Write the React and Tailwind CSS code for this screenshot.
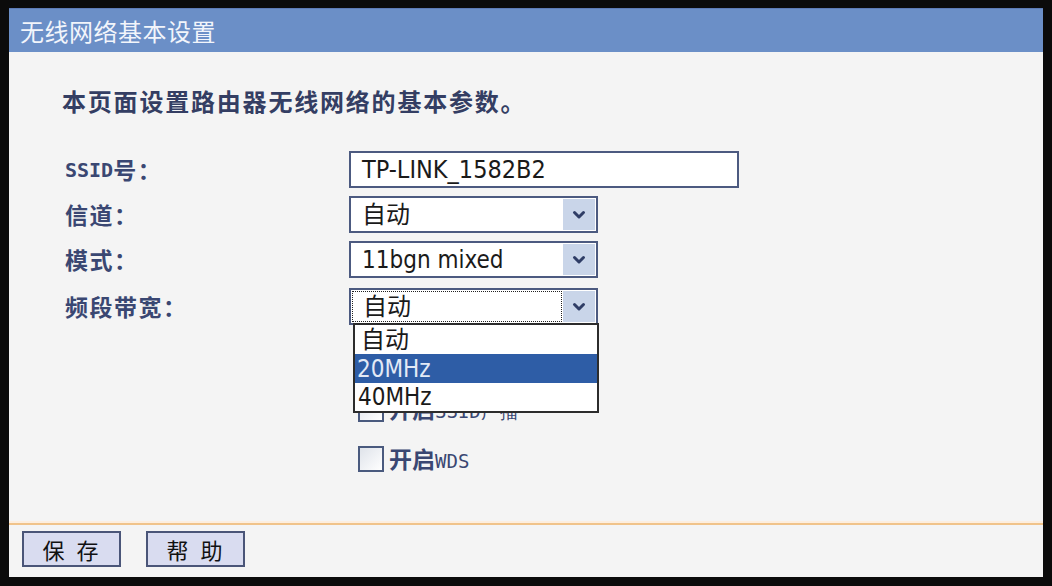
import React from "react";

const CJK = { fontFamily: '"Noto Sans CJK SC", "Noto Sans", sans-serif' };
const UI = { fontFamily: '"DejaVu Sans Condensed", "DejaVu Sans", "Noto Sans CJK SC", sans-serif' };
const MONO = { fontFamily: '"DejaVu Sans Mono", "Liberation Mono", monospace' };

function Chevron() {
  return (
    <svg width="16" height="16" viewBox="0 0 16 16" className="block">
      <polyline points="3.5,5.5 8,10 12.5,5.5" fill="none" stroke="#2f3d66" strokeWidth="3" strokeLinecap="round" strokeLinejoin="round" />
    </svg>
  );
}

function Select({ value, focused, children }) {
  return (
    <div className="relative w-[249px] h-[37px] border-2 border-[#4c5a80] bg-white flex">
      <div className="flex-1 flex items-center p-[1px]">
        <div
          className={
            "w-full h-full flex items-center pl-[10px] text-[24px] text-[#1a1a1a] " +
            (focused ? "border border-dotted border-[#222]" : "")
          }
          style={UI}
        >
          {value}
        </div>
      </div>
      <div className="w-[32px] my-[1px] mr-[1px] bg-[#c9d5e9] flex items-center justify-center">
        <Chevron />
      </div>
      {children}
    </div>
  );
}

function Checkbox({ label, latin }) {
  return (
    <div className="flex items-center h-[26px] ml-[9px] gap-[5px]">
      <div className="w-[26px] h-[26px] border-2 border-[#4a5a7e] bg-gradient-to-br from-[#dfe3ea] to-white" />
      {label && (
        <span className="text-[23px] font-bold text-[#3a4772] leading-none" style={CJK}>
          {label}
          {latin && (
            <span className="text-[19px] font-normal" style={MONO}>
              {latin}
            </span>
          )}
        </span>
      )}
    </div>
  );
}

function Label({ children }) {
  return (
    <div className="flex items-center h-[37px] text-[23px] tracking-[1.5px] font-bold text-[#3a4772]" style={CJK}>
      {children}
    </div>
  );
}

export default function App() {
  return (
    <div className="w-[1052px] h-[586px] bg-[#0b0b0b] pt-[8px] pl-[9px] pr-[9px] pb-[9px] flex">
      <div className="flex-1 flex flex-col bg-[#f4f4f4]">
        <div
          className="h-[44px] bg-[#6b8fc7] border-t border-[#5d7bb6] flex items-center pl-[11px] text-[24px] tracking-[0.5px] text-[#f2f5fb]"
          style={CJK}
        >
          无线网络基本设置
        </div>

        <div className="flex-1 pt-[37px]">
          <div className="pl-[53px] text-[24px] leading-[24px] tracking-[1.8px] font-bold text-[#343e63]" style={CJK}>
            本页面设置路由器无线网络的基本参数。
          </div>

          <div className="mt-[38px] pl-[56px] grid grid-cols-[284px_1fr]">
            <div className="flex flex-col">
              <Label>
                <span style={MONO} className="text-[20px] tracking-normal">SSID</span>号：
              </Label>
              <div className="mt-[8px]"><Label>信道：</Label></div>
              <div className="mt-[8px]"><Label>模式：</Label></div>
              <div className="mt-[10px]"><Label>频段带宽：</Label></div>
            </div>
            <div className="flex flex-col">
              <div className="w-[390px] h-[37px] border-2 border-[#4c5a80] bg-white flex items-center pl-[11px] text-[25px] text-[#1a1a1a]" style={UI}>
                TP-LINK_1582B2
              </div>
              <div className="mt-[8px]"><Select value="自动" /></div>
              <div className="mt-[8px]"><Select value="11bgn mixed" /></div>
              <div className="mt-[10px] relative z-10">
                <Select value="自动" focused>
                  <div className="absolute top-full left-[2px] w-[246px] border-2 border-[#2c2c2c] bg-white flex flex-col text-[24px]" style={UI}>
                    <div className="h-[29px] flex items-center pl-[6px] text-[#1a1a1a]">自动</div>
                    <div className="h-[29px] flex items-center pl-[2px] bg-[#2e5da6] text-[#e3eaf6]">20MHz</div>
                    <div className="h-[28px] flex items-center pl-[3px] text-[#1a1a1a]">40MHz</div>
                  </div>
                </Select>
              </div>
              <div className="mt-[21px] flex flex-col gap-[24px]">
                <Checkbox />
                <Checkbox label="开启" latin="SSID广播" />
                <Checkbox label="开启" latin="WDS" />
              </div>
            </div>
          </div>
        </div>

        <div className="border-t-2 border-[#f0c38a] shadow-[0_-2px_0_#fdeede]" />
        <div className="flex gap-[25px] pl-[13px] pt-[6px] pb-[10px]">
          <button className="w-[99px] h-[36px] bg-[#d9dcf0] border-2 border-[#4a5578] text-[22px] text-[#111] tracking-[12px] pl-[10px]" style={CJK}>
            保存
          </button>
          <button className="w-[99px] h-[36px] bg-[#d9dcf0] border-2 border-[#4a5578] text-[22px] text-[#111] tracking-[12px] pl-[10px]" style={CJK}>
            帮助
          </button>
        </div>
      </div>
    </div>
  );
}
